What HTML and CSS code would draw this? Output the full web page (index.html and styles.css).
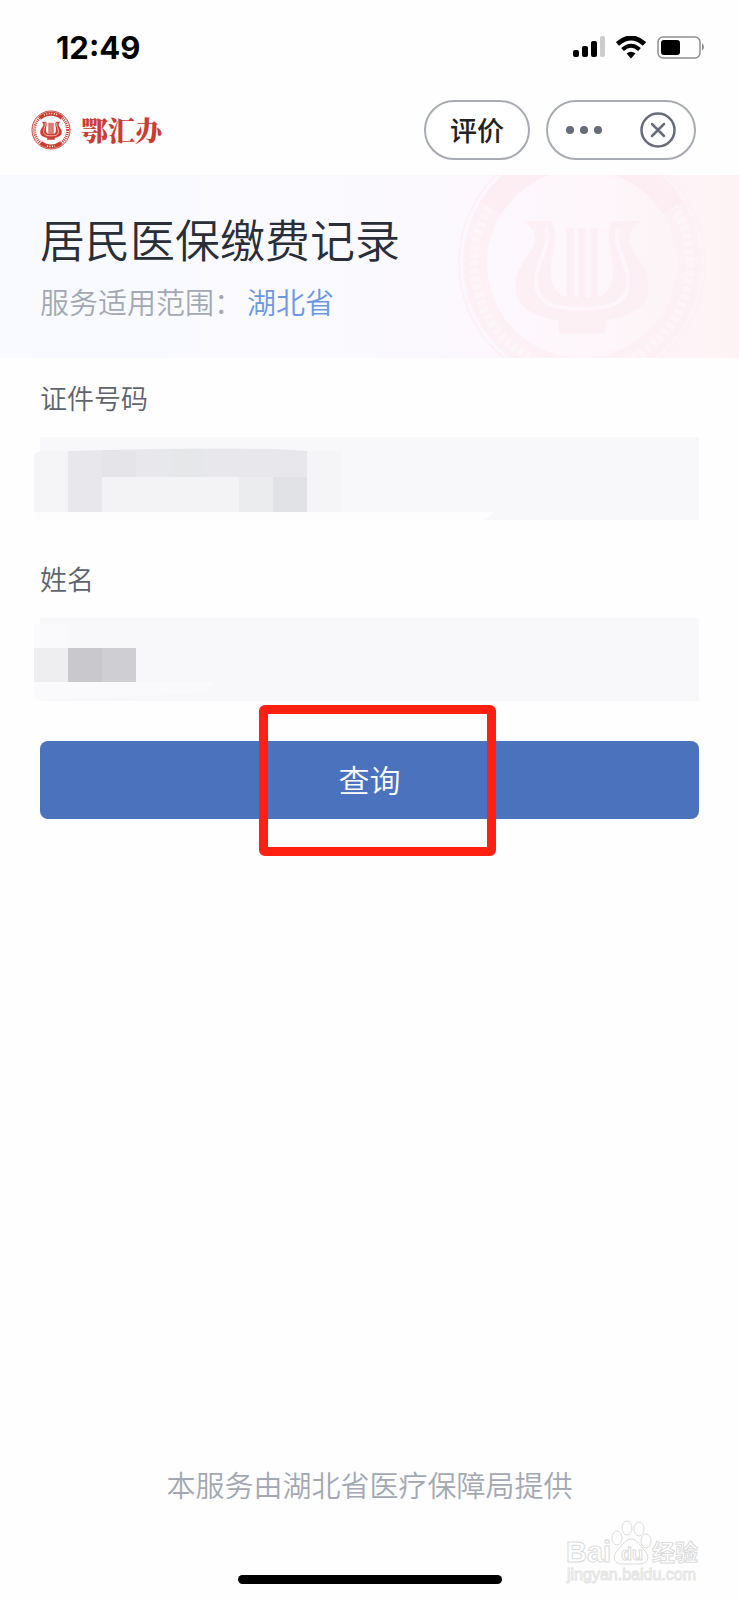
FILE: index.html
```
<!DOCTYPE html>
<html lang="zh-CN">
<head>
    <meta charset="UTF-8">
    <meta name="viewport" content="width=device-width, initial-scale=1.0">
    <title>居民医保缴费记录</title>
    <link rel="stylesheet" href="styles.css">
</head>
<body>
    <svg class="defs" width="0" height="0" aria-hidden="true">
        <symbol id="lyre" viewBox="0 0 104 90">
            <path d="M7 3 H28 C33 8 32 16 30 26 C27 42 27 58 40 61 H64 C77 58 77 42 74 26 C72 16 71 8 76 3 H97 C90 8 86 14 89 22 C94 32 103 38 103 54 C103 68 90 76 70 79 V89 H34 V79 C14 76 1 68 1 54 C1 38 10 32 15 22 C18 14 14 8 7 3 Z"/>
            <path d="M40 8 H46 V62 H40 Z M49 8 H55 V62 H49 Z M58 8 H64 V62 H58 Z"/>
            <path class="lyre-line" d="M24 8 C30 20 16 34 17 50 C17 66 30 70 52 70 C74 70 87 66 87 50 C88 34 74 20 80 8"/>
        </symbol>
    </svg>

    <div class="status-bar">
        <span class="time">12:49</span>
        <div class="status-icons">
            <svg width="32" height="22" viewBox="0 0 32 22">
                <rect x="0" y="14" width="6" height="7" rx="2"/>
                <rect x="9" y="10" width="6" height="11" rx="2"/>
                <rect x="18" y="5" width="6" height="16" rx="2"/>
                <rect x="27" y="0" width="5" height="21" rx="2" fill="#ccc"/>
            </svg>
            <svg width="30" height="23" viewBox="0 0 30 23">
                <path d="M1.500 8 Q15 -4 28.500 8" fill="none" stroke="#000" stroke-width="5"/>
                <path d="M6.500 13.500 Q15 6 23.500 13.500" fill="none" stroke="#000" stroke-width="4"/>
                <path d="M10.500 17.500 Q15 14 19.500 17.500 L15 22.500 Z"/>
            </svg>
            <svg width="48" height="23" viewBox="0 0 48 23">
                <rect x="1" y="1" width="42" height="21" rx="5" fill="none" stroke="#8e8e8e" stroke-width="1.500"/>
                <rect x="4" y="4" width="19" height="15" rx="3"/>
                <path d="M45 7 Q49 11 45 15 Z" fill="#8e8e8e"/>
            </svg>
        </div>
    </div>

    <header class="nav-bar">
        <a class="brand" href="#">
            <svg class="brand-logo" width="40" height="40" viewBox="0 0 40 40">
                <circle cx="20" cy="20" r="19" fill="none" stroke="currentColor" stroke-width="1"/>
                <circle cx="20" cy="20" r="16.500" fill="none" stroke="currentColor" stroke-width="3" stroke-dasharray="1 1"/>
                <path d="M9 8 A16.500 16.500 0 0 1 31 8" fill="none" stroke="currentColor" stroke-width="4"/>
                <path d="M10 33 A16.500 16.500 0 0 0 30 33" fill="none" stroke="currentColor" stroke-width="4"/>
                <path d="M13 5 A16.500 16.500 0 0 1 27 5 M16 36 A16.500 16.500 0 0 0 24 36" fill="none" stroke="#fff" stroke-width="1.500" stroke-dasharray="1 1.500"/>
                <use href="#lyre" x="9" y="11" width="22" height="19"/>
            </svg>
            <span class="brand-name">鄂汇办</span>
        </a>
        <div class="nav-actions">
            <button type="button" class="pill rate">评价</button>
            <div class="pill capsule">
                <button type="button" class="icon-button" aria-label="更多">
                    <svg width="36" height="8" viewBox="0 0 36 8">
                        <circle cx="4" cy="4" r="4"/>
                        <circle cx="18" cy="4" r="4"/>
                        <circle cx="32" cy="4" r="4"/>
                    </svg>
                </button>
                <button type="button" class="icon-button" aria-label="关闭">
                    <svg width="36" height="36" viewBox="0 0 36 36">
                        <circle cx="18" cy="18" r="16.500" fill="none" stroke="#686c78" stroke-width="2.500"/>
                        <path d="M12 12 L24 24 M24 12 L12 24" fill="none" stroke="#686c78" stroke-width="2.500" stroke-linecap="round"/>
                    </svg>
                </button>
            </div>
        </div>
    </header>

    <section class="banner">
        <svg class="banner-seal" width="250" height="183" viewBox="0 0 250 183">
            <circle cx="125" cy="88" r="123" fill="none" stroke="#fdf1f6" stroke-width="2"/>
            <circle cx="125" cy="88" r="107" fill="none" stroke="#fdf1f6" stroke-width="24"/>
            <circle cx="125" cy="88" r="108" fill="none" stroke="#fef5f9" stroke-width="9" stroke-dasharray="5 3"/>
            <path d="M34 33 A107 107 0 0 1 216 33" fill="none" stroke="#fdeef4" stroke-width="24"/>
            <use href="#lyre" x="57" y="42" width="136" height="118"/>
        </svg>
        <h1>居民医保缴费记录</h1>
        <p>服务适用范围：<a href="#">湖北省</a></p>
    </section>

    <form class="query-form">
        <label for="idNumber">证件号码</label>
        <div class="field">
            <input type="text" id="idNumber">
            <svg class="mask" width="460" height="84" viewBox="0 0 460 84">
                <path d="M0 18 Q2 14 10 14 H307 V75 H0 Z" fill="#f5f5f7"/>
                <path d="M0 75 H460 Q452 84 440 84 H10 Q0 84 0 75 Z" fill="#fdfdfe"/>
                <path d="M34 14 Q205 9 273 14 V75 H34 Z" fill="#e8e7eb"/>
                <rect x="68" y="13" width="34" height="27" fill="#e5e4e8"/>
                <rect x="136" y="12" width="34" height="28" fill="#e5e7e8"/>
                <rect x="68" y="40" width="137" height="35" fill="#f3f3f6"/>
                <rect x="205" y="40" width="34" height="35" fill="#ebecee"/>
                <rect x="239" y="40" width="34" height="35" fill="#e0e2e5"/>
            </svg>
        </div>
        <label for="fullName">姓名</label>
        <div class="field">
            <input type="text" id="fullName">
            <svg class="mask" width="215" height="84" viewBox="0 0 215 84">
                <path d="M0 6 H34 V30 H0 Z M0 64 H180 Q170 76 150 76 L6 82 Q0 82 0 76 Z" fill="#fafafc"/>
                <rect x="0" y="30" width="34" height="34" fill="#eeeef0"/>
                <rect x="34" y="30" width="34" height="34" fill="#c9c8cd"/>
                <rect x="68" y="30" width="34" height="34" fill="#cfcfd3"/>
            </svg>
        </div>
        <div class="submit-row">
            <button type="button" class="submit">查询</button>
            <div class="highlight"></div>
        </div>
    </form>

    <footer>
        <p>本服务由湖北省医疗保障局提供</p>
        <div class="home-indicator"></div>
        <svg class="watermark" width="136" height="68" viewBox="0 0 136 68">
            <g fill="#fff" stroke="#dcdcdc" stroke-width="1">
                <text x="0" y="42" font-size="29" font-weight="700">Bai</text>
                <ellipse cx="51" cy="18" rx="5" ry="7"/>
                <ellipse cx="61" cy="8" rx="5" ry="7"/>
                <ellipse cx="73" cy="9" rx="5" ry="7"/>
                <ellipse cx="80" cy="21" rx="5" ry="7"/>
                <path d="M65 19 C71 19 74 26 79 31 C85 38 81 44 74 44 H56 C48 44 46 37 51 31 C56 26 59 19 65 19 Z"/>
                <text x="55" y="40" font-size="18" font-weight="700">du</text>
                <text x="86" y="41" font-size="23" font-weight="700">经验</text>
            </g>
            <text x="1" y="60" font-size="16" fill="#fff" stroke="#e4e4e4" stroke-width="1">jingyan.baidu.com</text>
        </svg>
    </footer>
</body>
</html>
```
FILE: styles.css
```
* {
    box-sizing: border-box;
}

body {
    display: flex;
    flex-direction: column;
    min-height: 100vh;
    margin: 0;
    background-color: #fefefe;
    color: #2a2e38;
    font-family: "Noto Sans CJK SC", sans-serif;
    font-weight: 350;
}

h1, p {
    margin: 0;
}

a {
    text-decoration: none;
}

button {
    padding: 0;
    border: none;
    background: none;
    font-family: inherit;
    cursor: pointer;
}

svg {
    display: block;
}

.defs {
    position: absolute;
}

/* status bar */
.status-bar {
    display: flex;
    justify-content: space-between;
    align-items: center;
    height: 94px;
    padding: 0 34px 0 56px;
}

.time {
    color: #000;
    font-family: Inter, sans-serif;
    font-size: 31px;
    font-weight: 700;
}

.status-icons {
    display: flex;
    align-items: center;
    gap: 11px;
}

/* top navigation */
.nav-bar {
    display: flex;
    justify-content: space-between;
    align-items: center;
    padding: 6px 43px 15px 31px;
}

.brand {
    display: flex;
    align-items: center;
    gap: 10px;
    color: #cb3d33;
}

.brand-logo {
    --line: #fff;
    fill: currentColor;
}

.lyre-line {
    fill: none;
    stroke: var(--line);
    stroke-width: 3;
}

.brand-name {
    font-family: "Noto Serif CJK SC", "Noto Sans CJK SC", serif;
    font-size: 27px;
    font-weight: 900;
    line-height: 40px;
}

.nav-actions {
    display: flex;
    gap: 16px;
}

.pill {
    height: 60px;
    border: 2px solid #a9abb2;
    border-radius: 30px;
    background-color: #fff;
}

.rate {
    width: 106px;
    padding-bottom: 2px;
    color: #222;
    font-size: 27px;
    font-weight: 500;
}

.capsule {
    display: flex;
    justify-content: space-between;
    align-items: center;
    width: 150px;
    padding: 0 18px;
}

.icon-button {
    fill: #686c78;
}

/* banner */
.banner {
    position: relative;
    height: 183px;
    padding: 30px 40px;
    overflow: hidden;
    background: linear-gradient(90deg, #f8faff 0%, #faf9fe 50%, #fdf7fc 75%, #fef2f4 100%);
}

.banner-seal {
    --line: #fef6fa;
    position: absolute;
    top: 0;
    right: 32px;
    fill: #fdf0f5;
}

.banner h1 {
    position: relative;
    font-size: 45px;
    font-weight: 350;
    line-height: 68px;
}

.banner p {
    position: relative;
    margin-top: 6px;
    color: #a4a8b2;
    font-size: 29px;
    line-height: 44px;
}

.banner a {
    margin-left: 4px;
    color: #6c98e2;
}

/* query form */
.query-form {
    padding: 20px 40px;
}

.query-form label {
    display: block;
    margin-bottom: 19px;
    color: #5f636d;
    font-size: 27px;
    line-height: 40px;
}

.field {
    position: relative;
    margin-bottom: 39px;
}

.field input {
    display: block;
    width: 100%;
    height: 83px;
    padding: 0 20px;
    border: none;
    background-color: #f8f8fb;
    font-family: inherit;
    font-size: 27px;
}

.mask {
    position: absolute;
    top: 0;
    left: -6px;
}

.submit-row {
    position: relative;
    padding-top: 1px;
}

.submit {
    display: block;
    width: 100%;
    height: 78px;
    padding-bottom: 4px;
    border-radius: 8px;
    background-color: #4b72bd;
    color: #fff;
    font-size: 31px;
    font-weight: 350;
}

.highlight {
    position: absolute;
    top: -35px;
    left: calc(50% - 111px);
    width: 237px;
    height: 151px;
    border: 9px solid #ff2012;
    border-radius: 6px;
    pointer-events: none;
}

/* footer */
footer {
    position: relative;
    margin-top: auto;
    padding-bottom: 16px;
    text-align: center;
}

footer p {
    color: #a4a8b2;
    font-size: 29px;
    line-height: 44px;
}

.home-indicator {
    width: 264px;
    height: 9px;
    margin: 69px auto 0;
    border-radius: 5px;
    background-color: #000;
}

.watermark {
    position: absolute;
    right: 37px;
    bottom: 12px;
    font-family: "Liberation Sans", "Noto Sans CJK SC", sans-serif;
    font-weight: 400;
    text-align: left;
}
```
